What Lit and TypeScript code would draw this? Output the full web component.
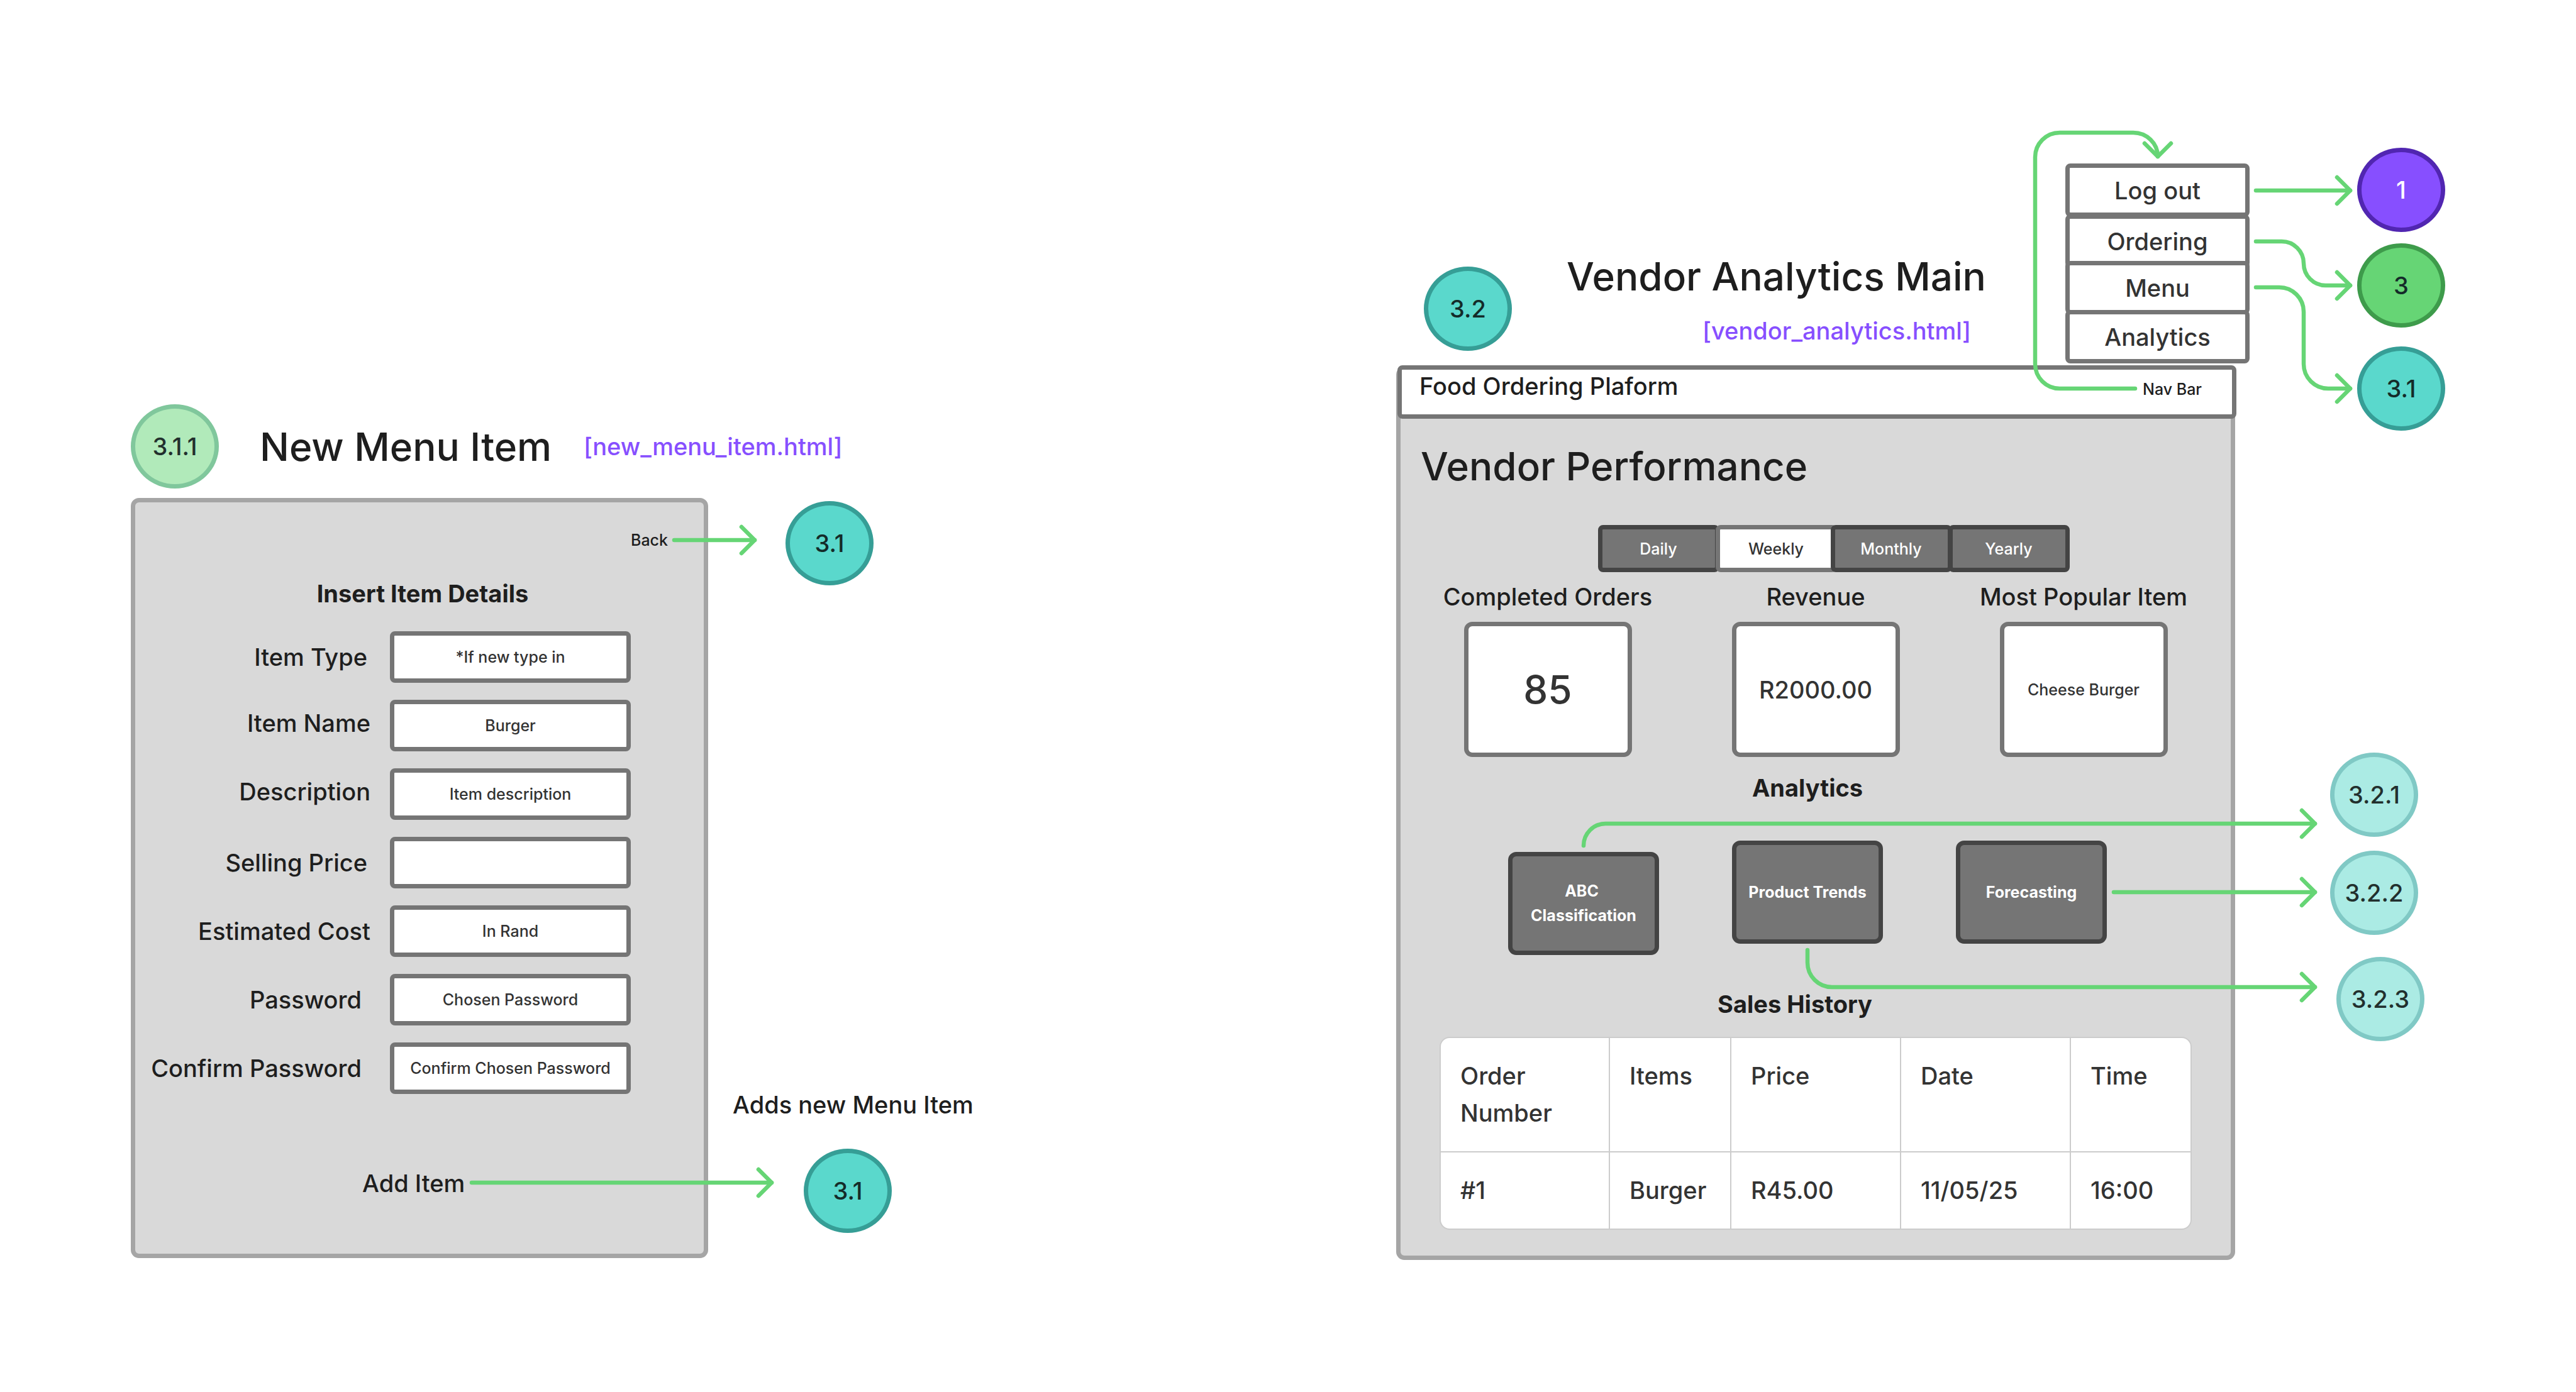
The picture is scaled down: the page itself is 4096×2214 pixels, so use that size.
import { LitElement, html, svg, css } from "lit";
import { customElement, property } from "lit/decorators.js";
import { classMap } from "lit/directives/class-map.js";
import { styleMap } from "lit/directives/style-map.js";

const baseStyles = css`
  *,
  *::before,
  *::after {
    box-sizing: border-box;
  }
  h1,
  h2,
  h3,
  p {
    margin: 0;
    font-weight: inherit;
  }
  a {
    color: inherit;
    text-decoration: none;
  }
  button,
  input {
    margin: 0;
    font: inherit;
    color: inherit;
  }
`;

type Tone = "mint" | "teal" | "aqua" | "green" | "purple";

interface Badge {
  label: string;
  tone: Tone;
  x: number;
  y: number;
}

interface Note {
  text: string;
  kind: "title" | "file" | "note";
  x: number;
  y: number;
}

interface Connector {
  line: string;
  tip: [number, number];
  down?: boolean;
}

const badges: Badge[] = [
  { label: "3.1.1", tone: "mint", x: 208, y: 643 },
  { label: "3.1", tone: "teal", x: 1249, y: 797 },
  { label: "3.1", tone: "teal", x: 1278, y: 1827 },
  { label: "3.2", tone: "teal", x: 2264, y: 424 },
  { label: "1", tone: "purple", x: 3748, y: 235 },
  { label: "3", tone: "green", x: 3748, y: 387 },
  { label: "3.1", tone: "teal", x: 3748, y: 551 },
  { label: "3.2.1", tone: "aqua", x: 3705, y: 1197 },
  { label: "3.2.2", tone: "aqua", x: 3705, y: 1353 },
  { label: "3.2.3", tone: "aqua", x: 3715, y: 1522 },
];

const notes: Note[] = [
  { text: "New Menu Item", kind: "title", x: 413, y: 671 },
  { text: "[new_menu_item.html]", kind: "file", x: 928, y: 686 },
  { text: "Adds new Menu Item", kind: "note", x: 1165, y: 1733 },
  { text: "Vendor Analytics Main", kind: "title", x: 2491, y: 400 },
  { text: "[vendor_analytics.html]", kind: "file", x: 2707, y: 502 },
];

const connectors: Connector[] = [
  { line: "M1072 859 H1200", tip: [1200, 859] },
  { line: "M750 1881 H1227", tip: [1227, 1881] },
  {
    line: "M3395 618 H3275 A39 39 0 0 1 3236 579 V250 A39 39 0 0 1 3275 211 H3392 A39 38 0 0 1 3431 249",
    tip: [3431, 249],
    down: true,
  },
  { line: "M3587 303 H3737", tip: [3737, 303] },
  { line: "M3587 384 H3628 A35 35 0 0 1 3663 419 A35 35 0 0 0 3698 454 H3737", tip: [3737, 454] },
  { line: "M3587 457 H3624 A39 39 0 0 1 3663 496 V579 A39 39 0 0 0 3702 618 H3737", tip: [3737, 618] },
  { line: "M2518 1345 A35 35 0 0 1 2553 1310 H3681", tip: [3681, 1310] },
  { line: "M3361 1419 H3681", tip: [3681, 1419] },
  { line: "M2874 1511 V1531 A39 39 0 0 0 2913 1570 H3681", tip: [3681, 1570] },
];

const arrowHead = ([x, y]: [number, number], down = false) =>
  down ? `M${x - 21} ${y - 21} L${x} ${y} L${x + 21} ${y - 21}` : `M${x - 21} ${y - 21} L${x} ${y} L${x - 21} ${y + 21}`;

@customElement("flow-badge")
export class FlowBadge extends LitElement {
  @property() label = "";
  @property() tone: Tone = "teal";

  static styles = [
    baseStyles,
    css`
      :host {
        display: block;
      }
      .badge {
        display: flex;
        align-items: center;
        justify-content: center;
        width: 140px;
        height: 134px;
        border: 7px solid;
        border-radius: 50%;
        font-size: 38px;
        line-height: 48px;
      }
      .text {
        color: #142b29;
      }
      .mint {
        background: #b1eaba;
        border-color: #80c79c;
      }
      .teal {
        background: #5ad8cc;
        border-color: #369e96;
      }
      .aqua {
        background: #abebe4;
        border-color: #80c9c5;
      }
      .aqua .text,
      .mint .text {
        color: #222f2d;
      }
      .green {
        background: #66d575;
        border-color: #3e9b4b;
      }
      .purple {
        background: #874fff;
        border-color: #5126b1;
      }
      .purple .text {
        color: #ffffff;
      }
    `,
  ];

  render() {
    return html`<a class="badge ${this.tone}" href="#screen-${this.label}"><span class="text">${this.label}</span></a>`;
  }
}

interface Field {
  id: string;
  label: string;
  value: string;
  inset?: "mid" | "far";
  raised?: boolean;
}

const fields: Field[] = [
  { id: "item-type", label: "Item Type", value: "*If new type in", inset: "mid" },
  { id: "item-name", label: "Item Name", value: "Burger", raised: true },
  { id: "description", label: "Description", value: "Item description", raised: true },
  { id: "selling-price", label: "Selling Price", value: "", inset: "mid" },
  { id: "estimated-cost", label: "Estimated Cost", value: "In Rand" },
  { id: "password", label: "Password", value: "Chosen Password", inset: "far" },
  { id: "confirm-password", label: "Confirm Password", value: "Confirm Chosen Password", inset: "far" },
];

@customElement("new-menu-item")
export class NewMenuItem extends LitElement {
  static styles = [
    baseStyles,
    css`
      :host {
        display: block;
      }
      .panel {
        display: flex;
        flex-direction: column;
        padding: 44px 0 88px;
        background: #d9d9d9;
        border: 7px solid #a5a5a5;
        border-radius: 13px;
      }
      .back {
        align-self: flex-end;
        margin-right: 57px;
        font-size: 25px;
        line-height: 32px;
      }
      .heading {
        margin-top: 45px;
        padding-left: 10px;
        text-align: center;
        font-size: 38px;
        line-height: 48px;
        font-weight: 700;
      }
      .fields {
        display: grid;
        gap: 27px;
        margin-top: 36px;
        padding-right: 116px;
      }
      .row {
        display: grid;
        grid-template-columns: 1fr 383px;
        align-items: center;
      }
      .label {
        padding-right: 31px;
        text-align: right;
        font-size: 38px;
        line-height: 48px;
      }
      .mid {
        padding-right: 36px;
      }
      .far {
        padding-right: 45px;
      }
      .raised {
        padding-bottom: 8px;
      }
      .input {
        width: 100%;
        height: 82px;
        padding: 0 8px;
        border: 7px solid #757575;
        border-radius: 8px;
        background: #ffffff;
        color: #333333;
        text-align: center;
        font-size: 25px;
        line-height: 32px;
        outline: none;
      }
      .add {
        align-self: flex-start;
        margin: 118px 0 0 361px;
        padding: 0;
        border: 0;
        background: none;
        font-size: 38px;
        line-height: 48px;
      }
    `,
  ];

  render() {
    return html`
      <form class="panel">
        <a class="back" href="#screen-3.1">Back</a>
        <h2 class="heading">Insert Item Details</h2>
        <div class="fields">
          ${fields.map(
            (f) => html`
              <div class="row">
                <label
                  class=${classMap({ label: true, mid: f.inset === "mid", far: f.inset === "far", raised: !!f.raised })}
                  for=${f.id}
                  >${f.label}</label
                >
                <input class="input" id=${f.id} type="text" .value=${f.value} />
              </div>
            `,
          )}
        </div>
        <button class="add" type="button">Add Item</button>
      </form>
    `;
  }
}

@customElement("site-menu")
export class SiteMenu extends LitElement {
  static styles = [
    baseStyles,
    css`
      :host {
        display: block;
      }
      .menu {
        display: flex;
        flex-direction: column;
      }
      .entry {
        display: flex;
        align-items: center;
        justify-content: center;
        height: 85px;
        border: 7px solid #757575;
        border-radius: 8px;
        background: #ffffff;
        color: #333333;
        font-size: 38px;
        line-height: 48px;
      }
      .ordering {
        margin-top: -4px;
      }
      .items {
        margin-top: -11px;
      }
      .analytics {
        margin-top: -7px;
      }
    `,
  ];

  render() {
    return html`
      <nav class="menu">
        <a class="entry" href="#screen-1">Log out</a>
        <a class="entry ordering" href="#screen-3">Ordering</a>
        <a class="entry items" href="#screen-3.1">Menu</a>
        <a class="entry analytics" href="#screen-3.2">Analytics</a>
      </nav>
    `;
  }
}

const periods = ["Daily", "Weekly", "Monthly", "Yearly"];

const stats = [
  { name: "Completed Orders", value: "85", size: "large" },
  { name: "Revenue", value: "R2000.00", size: "medium" },
  { name: "Most Popular Item", value: "Cheese Burger", size: "small" },
];

const tools = ["ABC \nClassification", "Product Trends", "Forecasting"];

const columns = ["Order Number", "Items", "Price", "Date", "Time"];
const sales = [["#1", "Burger", "R45.00", "11/05/25", "16:00"]];

@customElement("vendor-analytics")
export class VendorAnalytics extends LitElement {
  static styles = [
    baseStyles,
    css`
      :host {
        display: block;
      }
      .screen {
        display: flex;
        flex-direction: column;
        padding-bottom: 41px;
        background: #d9d9d9;
        border: 7px solid #a5a5a5;
        border-radius: 13px;
      }
      .bar {
        display: flex;
        align-items: baseline;
        justify-content: space-between;
        height: 85px;
        margin: -9px -9px 0 -5px;
        padding: 2px 48px 0 28px;
        border: 7px solid #757575;
        border-radius: 8px;
        background: #ffffff;
      }
      .brand {
        font-size: 38px;
        line-height: 48px;
      }
      .nav {
        font-size: 25px;
        line-height: 32px;
      }
      .title {
        margin-top: 36px;
        padding-left: 32px;
        font-size: 62px;
        line-height: 80px;
      }
      .periods {
        display: flex;
        justify-content: center;
        margin-top: 53px;
        padding-left: 57px;
      }
      .period {
        width: 193px;
        height: 75px;
        padding: 0;
        border: 7px solid #444444;
        border-radius: 8px;
        background: #757575;
        color: #ffffff;
        font-size: 25px;
        line-height: 32px;
      }
      .period + .period {
        margin-left: -6px;
      }
      .selected {
        border-color: #757575;
        background: #ffffff;
        color: #333333;
      }
      .selected + .period {
        margin-left: -10px;
      }
      .stats {
        display: grid;
        grid-template-columns: repeat(3, 426px);
        justify-content: center;
        margin-top: 15px;
      }
      .stat {
        display: flex;
        flex-direction: column;
        align-items: center;
        gap: 16px;
      }
      .name {
        font-size: 38px;
        line-height: 48px;
      }
      .card {
        display: flex;
        align-items: center;
        justify-content: center;
        width: 267px;
        height: 215px;
        border: 7px solid #757575;
        border-radius: 13px;
        background: #ffffff;
        color: #333333;
      }
      .large {
        font-size: 62px;
        line-height: 80px;
      }
      .medium {
        font-size: 38px;
        line-height: 48px;
      }
      .small {
        font-size: 25px;
        line-height: 32px;
      }
      .section {
        text-align: center;
        font-size: 38px;
        line-height: 48px;
        font-weight: 700;
      }
      .analytics {
        margin-top: 25px;
        padding-right: 26px;
      }
      .tools {
        display: flex;
        align-items: flex-start;
        justify-content: center;
        gap: 116px;
        margin-top: 60px;
        padding-right: 26px;
      }
      .tool {
        width: 240px;
        height: 164px;
        padding: 0;
        border: 7px solid #444444;
        border-radius: 13px;
        background: #757575;
        color: #ffffff;
        font-size: 25px;
        line-height: 39px;
        font-weight: 700;
        white-space: pre;
      }
      .lowered {
        margin-top: 18px;
      }
      .history {
        margin-top: 54px;
        padding-right: 66px;
      }
      .sheet {
        align-self: center;
        margin-top: 28px;
        border: 2px solid #cccccc;
        border-radius: 16px;
        background: #ffffff;
        overflow: hidden;
      }
      .table {
        width: 1192px;
        table-layout: fixed;
        border-spacing: 0;
        color: #333333;
        font-size: 38px;
        line-height: 59px;
      }
      .wide {
        width: 270px;
      }
      .first {
        width: 267px;
      }
      .narrow {
        width: 193px;
      }
      .cell {
        padding: 31px;
        text-align: left;
        vertical-align: top;
        font-weight: inherit;
      }
      .cell + .cell {
        border-left: 2px solid #cccccc;
      }
      .line {
        border-top: 2px solid #cccccc;
      }
    `,
  ];

  render() {
    return html`
      <article class="screen">
        <header class="bar">
          <span class="brand">Food Ordering Plaform</span>
          <a class="nav" href="#menu">Nav Bar</a>
        </header>
        <h2 class="title">Vendor Performance</h2>
        <div class="periods">
          ${periods.map(
            (p) => html`<button class=${classMap({ period: true, selected: p === "Weekly" })} type="button">${p}</button>`,
          )}
        </div>
        <div class="stats">
          ${stats.map(
            (s) => html`
              <div class="stat">
                <h3 class="name">${s.name}</h3>
                <div class="card ${s.size}">${s.value}</div>
              </div>
            `,
          )}
        </div>
        <h3 class="section analytics">Analytics</h3>
        <div class="tools">
          ${tools.map(
            (t, i) => html`<button class=${classMap({ tool: true, lowered: i === 0 })} type="button">${t}</button>`,
          )}
        </div>
        <h3 class="section history">Sales History</h3>
        <div class="sheet">
          <table class="table">
            <colgroup>
              <col class="first" />
              <col class="narrow" />
              <col class="wide" />
              <col class="wide" />
              <col />
            </colgroup>
            <thead>
              <tr>
                ${columns.map((c) => html`<th class="cell" scope="col">${c}</th>`)}
              </tr>
            </thead>
            <tbody>
              ${sales.map((row) => html`<tr>${row.map((v) => html`<td class="cell line">${v}</td>`)}</tr>`)}
            </tbody>
          </table>
        </div>
      </article>
    `;
  }
}

@customElement("app-root")
export class AppRoot extends LitElement {
  static styles = [
    baseStyles,
    css`
      :host {
        display: block;
        font-family: Inter, "Liberation Sans", sans-serif;
        font-weight: 500;
        color: #1e1e1e;
      }
      .board {
        position: relative;
        min-height: 100vh;
        background: #ffffff;
        overflow: hidden;
      }
      .node {
        position: absolute;
      }
      .new-item {
        left: 208px;
        top: 792px;
        width: 918px;
      }
      .analytics {
        left: 2220px;
        top: 583px;
        width: 1334px;
      }
      .menu {
        left: 3284px;
        top: 260px;
        width: 293px;
      }
      .title {
        font-size: 62px;
        line-height: 80px;
        white-space: nowrap;
      }
      .file,
      .note {
        font-size: 38px;
        line-height: 48px;
        white-space: nowrap;
      }
      .file {
        color: #874fff;
      }
      .connectors {
        position: absolute;
        inset: 0;
        width: 100%;
        height: 100%;
        fill: none;
        stroke: #66d575;
        stroke-width: 6.5px;
        stroke-linecap: round;
        stroke-linejoin: round;
        pointer-events: none;
      }
    `,
  ];

  private place(x: number, y: number) {
    return styleMap({ left: `${x}px`, top: `${y}px` });
  }

  render() {
    return html`
      <main class="board">
        <new-menu-item class="node new-item"></new-menu-item>
        <vendor-analytics class="node analytics"></vendor-analytics>
        <site-menu class="node menu"></site-menu>
        ${notes.map((n) =>
          n.kind === "title"
            ? html`<h1 class="node title" style=${this.place(n.x, n.y)}>${n.text}</h1>`
            : html`<p class="node ${n.kind}" style=${this.place(n.x, n.y)}>${n.text}</p>`,
        )}
        ${badges.map(
          (b) => html`<flow-badge class="node" .label=${b.label} .tone=${b.tone} style=${this.place(b.x, b.y)}></flow-badge>`,
        )}
        <svg class="connectors" aria-hidden="true">
          ${connectors.map((c) => svg`<path d=${c.line}></path><path d=${arrowHead(c.tip, c.down)}></path>`)}
        </svg>
      </main>
    `;
  }
}
